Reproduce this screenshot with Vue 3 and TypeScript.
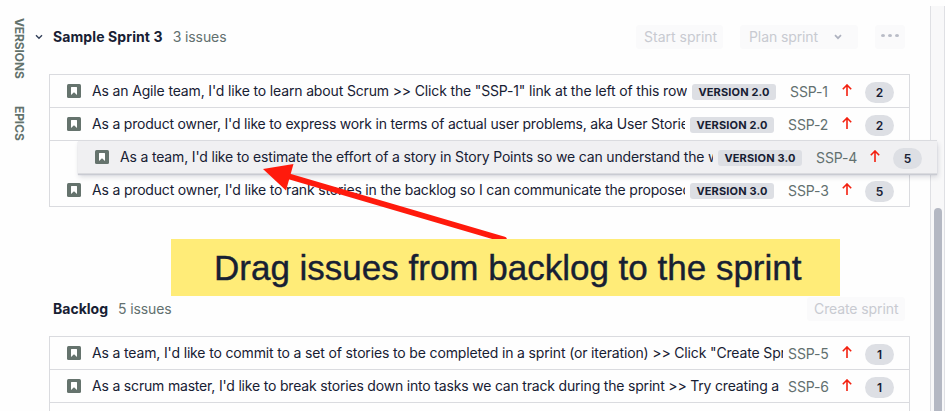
<script setup lang="ts">
interface Issue {
  key: string
  summary: string
  version?: string
  points: number
  dragged?: boolean
  keyWidth: number
  tracking: number
}

interface Section {
  id: string
  title: string
  count: string
  issues: Issue[]
}

const sections: Section[] = [
  {
    id: 'sprint',
    title: 'Sample Sprint 3',
    count: '3 issues',
    issues: [
      { key: 'SSP-1', summary: 'As an Agile team, I\'d like to learn about Scrum >> Click the "SSP-1" link at the left of this row', version: 'VERSION 2.0', points: 2, keyWidth: 39, tracking: -0.15 },
      { key: 'SSP-2', summary: "As a product owner, I'd like to express work in terms of actual user problems, aka User Storie", version: 'VERSION 2.0', points: 2, keyWidth: 41, tracking: -0.2 },
      { key: 'SSP-4', summary: "As a team, I'd like to estimate the effort of a story in Story Points so we can understand the w", version: 'VERSION 3.0', points: 5, dragged: true, keyWidth: 41, tracking: -0.165 },
      { key: 'SSP-3', summary: "As a product owner, I'd like to rank stories in the backlog so I can communicate the proposed", version: 'VERSION 3.0', points: 5, keyWidth: 41, tracking: -0.18 },
    ],
  },
  {
    id: 'backlog',
    title: 'Backlog',
    count: '5 issues',
    issues: [
      { key: 'SSP-5', summary: 'As a team, I\'d like to commit to a set of stories to be completed in a sprint (or iteration) >> Click "Create Spr', points: 1, keyWidth: 41, tracking: -0.15 },
      { key: 'SSP-6', summary: "As a scrum master, I'd like to break stories down into tasks we can track during the sprint >> Try creating a", points: 1, keyWidth: 41, tracking: -0.185 },
    ],
  },
]
</script>

<template>
  <div class="board">
    <nav class="rail">
      <span class="rail-label">VERSIONS</span>
      <span class="rail-label">EPICS</span>
    </nav>

    <main class="content">
      <section v-for="s in sections" :key="s.id" :class="['section', s.id]">
        <header class="head">
          <svg v-if="s.id === 'sprint'" class="chevron" width="8" height="6" viewBox="0 0 8 6"><path d="M1 1.2 4 4.2 7 1.2" /></svg>
          <h2 class="title">{{ s.title }}</h2>
          <span class="count">{{ s.count }}</span>
          <div class="actions">
            <template v-if="s.id === 'sprint'">
              <button class="btn start">Start sprint</button>
              <button class="btn plan">
                Plan sprint
                <svg width="8" height="6" viewBox="0 0 8 6"><path d="M1 1.2 4 4.2 7 1.2" /></svg>
              </button>
              <button class="btn more"><i></i><i></i><i></i></button>
            </template>
            <button v-else class="btn create">Create sprint</button>
          </div>
        </header>

        <div class="list">
          <div v-for="i in s.issues" :key="i.key" :class="['row', { dragged: i.dragged }]">
            <svg class="type" width="14" height="14" viewBox="0 0 14 14">
              <rect width="14" height="14" rx="1.5" />
              <path d="M4 3.500Q4 3 4.500 3H9.500Q10 3 10 3.500V11L7 8.300 4 11Z" />
            </svg>
            <span class="summary" :style="{ letterSpacing: i.tracking + 'px' }">{{ i.summary }}</span>
            <span v-if="i.version" class="version">{{ i.version }}</span>
            <span class="key" :style="{ width: i.keyWidth + 'px' }">{{ i.key }}</span>
            <svg class="priority" width="10" height="12" viewBox="0 0 10 12"><path d="M5 12V1.200M.8 5.200 5 1 9.200 5.200" /></svg>
            <span class="points">{{ i.points }}</span>
          </div>
          <div v-if="s.id === 'backlog'" class="row"></div>
        </div>
      </section>
    </main>

    <div class="scrollbar"><div class="thumb"></div></div>

    <svg class="pointer" width="945" height="411" viewBox="0 0 945 411">
      <path class="shaft" d="M286 175.500 504 239.500" />
      <path class="tip" d="M263 169 293.500 164 286 190.500Z" />
    </svg>
    <div class="callout"><span>Drag issues from backlog to the sprint</span></div>
  </div>
</template>

<style>
body {
  margin: 0;
  background: #fefefe;
}
</style>

<style scoped>
.board {
  position: relative;
  display: flex;
  width: 945px;
  height: 411px;
  overflow: hidden;
  background: #fefefe;
  color: #172033;
  font-family: Inter, "Liberation Sans", sans-serif;
  font-size: 14px;
}
.rail {
  display: flex;
  flex-direction: column;
  gap: 27px;
  width: 25px;
  margin-right: 24px;
  padding-top: 18px;
  box-sizing: border-box;
}
.rail-label {
  writing-mode: vertical-rl;
  margin-left: 11px;
  width: 16px;
  line-height: 16px;
  font-size: 12px;
  font-weight: 700;
  letter-spacing: -0.1px;
  color: #62726c;
  white-space: nowrap;
}
.content {
  width: 861px;
  flex: none;
}
.sprint {
  padding-top: 21px;
}
.backlog {
  padding-top: 86px;
}
.head {
  display: flex;
  align-items: center;
  height: 30px;
  margin-bottom: 23px;
  padding-left: 4px;
}
.backlog .head {
  margin-bottom: 13px;
}
.chevron {
  margin-left: -18px;
  margin-right: 10px;
  margin-top: 2px;
}
svg path {
  fill: none;
}
.chevron path {
  stroke: #33405a;
  stroke-width: 1.4;
}
.title {
  margin: 0;
  font-size: 14px;
  font-weight: 700;
  letter-spacing: 0.1px;
  white-space: nowrap;
}
.backlog .title {
  letter-spacing: 0;
}
.count {
  margin-left: 10px;
  color: #62706f;
  letter-spacing: -0.1px;
  white-space: nowrap;
}
.actions {
  display: flex;
  gap: 17px;
  margin-left: auto;
  margin-right: 5px;
  margin-top: 1px;
}
.btn {
  display: flex;
  align-items: center;
  box-sizing: border-box;
  height: 24px;
  padding: 0 0 0 8px;
  border: 0;
  border-radius: 3px;
  background: #fafafb;
  color: #c8cad1;
  font: inherit;
  line-height: 16px;
  white-space: nowrap;
}
.start { width: 87px; }
.plan { width: 118px; gap: 16px; padding-left: 9px; letter-spacing: -0.1px; }
.plan path { stroke: #aeb2bf; stroke-width: 1.7; }
.more { width: 30px; gap: 3px; justify-content: center; padding: 0 0 2px; }
.more i { width: 4px; height: 3px; border-radius: 50%; background: #b9bcc7; }
.create { width: 98px; padding-left: 7px; letter-spacing: -0.1px; }
.list {
  border: 1px solid #dadbdf;
  border-bottom: 0;
}
.row {
  display: flex;
  align-items: center;
  box-sizing: border-box;
  height: 33px;
  padding: 0 15px 0 17px;
  border-bottom: 1px solid #dadbdf;
}
.type {
  flex: none;
  margin-right: 11px;
}
.type rect { fill: #65736d; }
.type path { fill: #fff; }
.summary {
  flex: 1;
  min-width: 0;
  overflow: hidden;
  white-space: nowrap;
  line-height: 20px;
}
.version {
  flex: none;
  width: 84px;
  height: 16px;
  margin: 1px 9px 0 5px;
  border-radius: 3px;
  background: #dddfe4;
  font-size: 11px;
  font-weight: 700;
  letter-spacing: 0.15px;
  line-height: 16px;
  text-align: center;
  white-space: nowrap;
}
.key {
  flex: none;
  margin-left: 5px;
  padding-top: 1px;
  color: #62706f;
  letter-spacing: -0.1px;
  white-space: nowrap;
}
.priority {
  flex: none;
  margin: -3px 13px 0;
}
.priority path {
  stroke: #f3200f;
  stroke-width: 1.6;
}
.points {
  flex: none;
  width: 29px;
  height: 21px;
  margin-top: 3px;
  border-radius: 11px;
  background: #dddfe4;
  font-size: 12px;
  font-weight: 600;
  line-height: 21px;
  text-align: center;
}
.row.dragged {
  position: relative;
  left: 28px;
  background: #f0f0f2;
  box-shadow: 0 -1px 0 #dadbdf, 0 1px 1px #c9cbd2, 1px 3px 5px rgba(30, 40, 60, 0.16);
}
.scrollbar {
  box-sizing: border-box;
  width: 15px;
  height: 405px;
  margin: 6px 0 0 20px;
  padding: 202px 3px 0;
  border: 1px solid #dfe0e4;
  border-width: 0 1px;
  background: #f8f8f9;
}
.thumb {
  width: 8px;
  height: 230px;
  border-radius: 4px;
  background: #b4b8c3;
}
.pointer {
  position: absolute;
  left: 0;
  top: 0;
}
.pointer .shaft {
  stroke: #ff1a0c;
  stroke-width: 5.5;
  stroke-linecap: round;
}
.pointer .tip {
  fill: #ff1a0c;
}
.callout {
  position: absolute;
  left: 171px;
  top: 239px;
  width: 669px;
  height: 57px;
  box-sizing: border-box;
  padding-left: 43px;
  background: #ffec78;
  font-family: "Liberation Sans", Arial, sans-serif;
  font-size: 35px;
  line-height: 58px;
  white-space: nowrap;
  -webkit-text-stroke: 0.4px #172033;
}
</style>
